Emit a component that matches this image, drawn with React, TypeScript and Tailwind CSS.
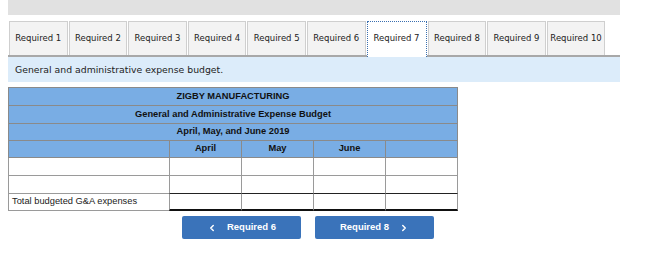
import { ChevronLeft, ChevronRight } from "lucide-react";

const tabs = Array.from({ length: 10 }, (_, i) => `Required ${i + 1}`);

const App = () => {
  return (
    <div className="bg-white w-[659px] h-[279px] pl-2">
      <div className="w-[612px] h-[15px] bg-[#e1e1e1]" />

      <div className="w-[612px] mt-[6px] flex items-end gap-[1px] pl-[1px] border-b-2 border-[#a8a8a8] font-['DejaVu_Sans',sans-serif] text-[8.5px] text-[#222]">
        {tabs.map((t, i) =>
          i === 6 ? (
            <div
              key={t}
              className="w-[60px] h-[36px] -mb-[2px] pb-[2px] flex items-center justify-center bg-white border border-dotted border-[#3a6fb0] border-b-0"
            >
              {t}
            </div>
          ) : (
            <div
              key={t}
              className="w-[58.6px] h-[34px] flex items-center justify-center bg-[#f3f3f3] border border-[#cfcfcf] border-b-0"
            >
              {t}
            </div>
          )
        )}
      </div>

      <div className="w-[612px] h-[25px] bg-[#dcecfa] flex items-center pl-[7px] font-['DejaVu_Sans',sans-serif] text-[9.3px] text-[#222]">
        General and administrative expense budget.
      </div>

      <div className="mt-[5px] w-[450px] font-['Liberation_Sans',Arial,sans-serif] text-[9.3px] text-[#111]">
        <div className="border border-[#8a8a8a] bg-[#79ade4]">
          <div className="h-[18px] flex items-center justify-center font-bold border-b border-[#8a8a8a]">
            ZIGBY MANUFACTURING
          </div>
          <div className="h-[18px] flex items-center justify-center font-bold border-b border-[#8a8a8a]">
            General and Administrative Expense Budget
          </div>
          <div className="h-[17px] flex items-center justify-center font-bold border-b border-[#8a8a8a]">
            April, May, and June 2019
          </div>
          <div className="grid grid-cols-[160px_72px_72px_72px_1fr] h-[16px] font-bold">
            <div />
            <div className="border-l border-[#8a8a8a] flex items-center justify-center">April</div>
            <div className="border-l border-[#8a8a8a] flex items-center justify-center">May</div>
            <div className="border-l border-[#8a8a8a] flex items-center justify-center">June</div>
            <div className="border-l border-[#8a8a8a]" />
          </div>
        </div>
        <div className="grid grid-cols-[161px_72px_72px_72px_1fr] bg-white">
          {[0, 1].map((r) => (
            <div key={r} className="contents">
              <div className="h-[18px] border-l border-b border-[#9a9a9a]" />
              <div className={`h-[18px] border-l border-[#9a9a9a] ${r === 1 ? "border-b border-b-[#222]" : "border-b"}`} />
              <div className={`h-[18px] border-l border-[#9a9a9a] ${r === 1 ? "border-b border-b-[#222]" : "border-b"}`} />
              <div className={`h-[18px] border-l border-[#9a9a9a] ${r === 1 ? "border-b border-b-[#222]" : "border-b"}`} />
              <div className={`h-[18px] border-l border-r border-[#9a9a9a] ${r === 1 ? "border-b border-b-[#222]" : "border-b"}`} />
            </div>
          ))}
          <div className="h-[17px] border-l border-b border-[#9a9a9a] flex items-center pl-[3px] text-[#222]">
            Total budgeted G&amp;A expenses
          </div>
          <div className="h-[17px] border-l border-[#9a9a9a] border-b-2 border-b-[#111]" />
          <div className="h-[17px] border-l border-[#9a9a9a] border-b-2 border-b-[#111]" />
          <div className="h-[17px] border-l border-[#9a9a9a] border-b-2 border-b-[#111]" />
          <div className="h-[17px] border-l border-r border-[#9a9a9a] border-b-2 border-b-[#111]" />
        </div>
      </div>

      <div className="mt-[5px] ml-[174px] flex gap-[14px] font-['Liberation_Sans',Arial,sans-serif] text-[9.5px] font-bold text-white">
        <button className="w-[119px] h-[23px] bg-[#3a73ba] rounded-[2px] flex items-center justify-center gap-[10px]">
          <ChevronLeft className="w-[10px] h-[10px]" strokeWidth={3.5} />
          Required 6
        </button>
        <button className="w-[119px] h-[23px] bg-[#3a73ba] rounded-[2px] flex items-center justify-center gap-[10px]">
          Required 8
          <ChevronRight className="w-[10px] h-[10px]" strokeWidth={3.5} />
        </button>
      </div>
    </div>
  );
};

export default App;
